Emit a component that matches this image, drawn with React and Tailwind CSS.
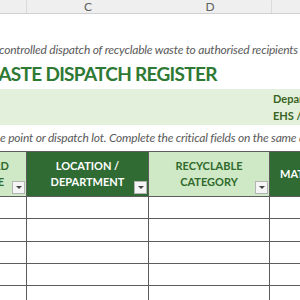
import React from 'react';

const FilterButton = () => (
    <div className="absolute right-[1px] bottom-[2px] w-[13px] h-[13px] bg-[#f5f5f5] border border-[#b4b4b4] flex items-center justify-center">
        <div className="w-0 h-0 border-l-[3px] border-r-[3px] border-t-[3px] border-l-transparent border-r-transparent border-t-[#444]" />
    </div>
);

const DataRow = ({ h }) => (
    <div className={`flex border-b border-[#5c5c5c] ${h}`}>
        <div className="w-[27px] shrink-0 border-r border-[#5c5c5c]" />
        <div className="w-[122px] shrink-0 border-r border-[#5c5c5c]" />
        <div className="w-[121px] shrink-0 border-r border-[#5c5c5c]" />
        <div className="flex-1" />
    </div>
);

const App = () => {
    return (
        <div className="w-[300px] h-[300px] overflow-hidden bg-white font-['Lato','Open_Sans',sans-serif]">
            {/* Column letters */}
            <div className="flex h-[14px] bg-[#efefef] border-b border-[#d0d0d0] text-[12px] leading-[13px] text-[#606060]">
                <div className="w-[27px] shrink-0 border-r border-[#dadada]" />
                <div className="w-[122px] shrink-0 text-center">C</div>
                <div className="w-[123px] shrink-0 text-center border-r border-[#dadada]">D</div>
                <div className="flex-1" />
            </div>

            <div className="h-[26px]" />

            {/* Subtitle */}
            <div className="h-[20px] flex items-center whitespace-nowrap overflow-hidden text-[12px] tracking-[-0.2px] italic text-[#5a5a5a]">
                <span className="-ml-[1px]">controlled dispatch of recyclable waste to authorised recipients and buyers</span>
            </div>

            {/* Title */}
            <div className="h-[29px] flex items-center whitespace-nowrap overflow-hidden text-[19px] tracking-[-0.7px] font-bold text-[#2e7a34]">
                <span className="-ml-[20px] shrink-0">WASTE DISPATCH REGISTER</span>
            </div>

            {/* Info band */}
            <div className="h-[36px] bg-[#e3f1dc] flex overflow-hidden">
                <div className="w-[273px] shrink-0" />
                <div className="flex flex-col justify-center whitespace-nowrap text-[11px] font-bold leading-[17px] text-[#3a6322]">
                    <span>Department</span>
                    <span>EHS / Stores</span>
                </div>
            </div>

            {/* Instruction */}
            <div className="h-[26px] flex items-center whitespace-nowrap overflow-hidden text-[12px] tracking-[-0.2px] italic text-[#5a5a5a]">
                <span className="shrink-0">e point or dispatch lot. Complete the critical fields on the same day.</span>
            </div>

            {/* Table header */}
            <div className="flex h-[46px] border-t border-b border-[#5c5c5c] text-[11px] font-bold leading-[16px]">
                <div className="relative w-[27px] shrink-0 bg-[#cfe8c6] border-r border-[#5c5c5c] overflow-hidden">
                    <div className="absolute right-[17px] top-0 bottom-0 flex flex-col justify-center text-right text-[#2f6a2c] whitespace-nowrap">
                        <span>RECORD</span>
                        <span className="pr-[5px]">DATE</span>
                    </div>
                    <FilterButton />
                </div>
                <div className="relative w-[122px] shrink-0 bg-[#2f6b33] border-r border-[#5c5c5c] flex flex-col items-center justify-center text-white">
                    <span>LOCATION /</span>
                    <span>DEPARTMENT</span>
                    <FilterButton />
                </div>
                <div className="relative w-[121px] shrink-0 bg-[#cfe8c6] border-r border-[#5c5c5c] flex flex-col items-center justify-center text-[#2f6a2c]">
                    <span>RECYCLABLE</span>
                    <span>CATEGORY</span>
                    <FilterButton />
                </div>
                <div className="flex-1 min-w-0 bg-[#2f6b33] flex items-center pl-[10px] text-white whitespace-nowrap overflow-hidden">
                    <span>MATERIAL</span>
                </div>
            </div>

            <DataRow h="h-[22px]" />
            <DataRow h="h-[23px]" />
            <DataRow h="h-[22px]" />
            <DataRow h="h-[22px]" />
            <DataRow h="h-[22px]" />
        </div>
    );
};

export default App;
